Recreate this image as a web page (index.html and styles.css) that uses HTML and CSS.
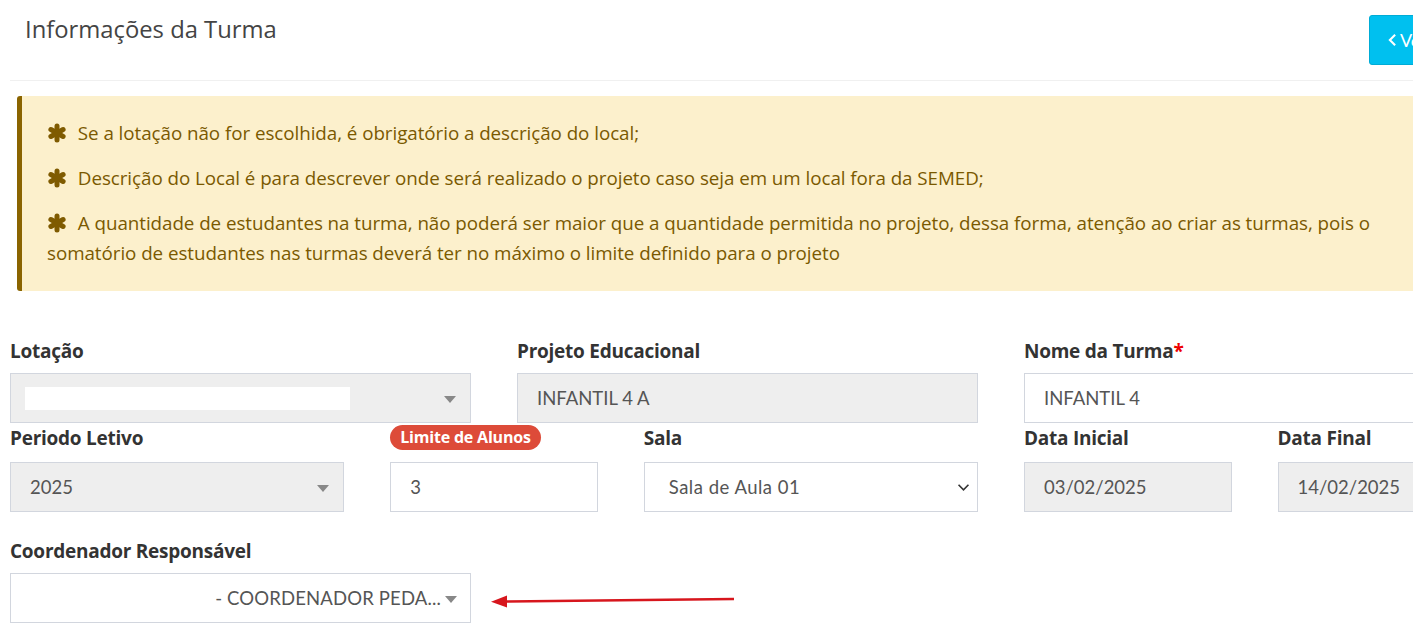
FILE: index.html
```html
<!DOCTYPE html>
<html lang="pt-BR">
<head>
<meta charset="utf-8">
<title>Informações da Turma</title>
<link rel="stylesheet" href="styles.css">
</head>
<body>
<div class="page">
  <div class="header">
    <h3 class="title">Informações da Turma</h3>
    <a class="btn-back"><svg class="chev" viewBox="0 0 10 16" width="9" height="14"><path d="M8 2 L2 8 L8 14" fill="none" stroke="#fff" stroke-width="2.4"/></svg>Voltar</a>
  </div>
  <hr class="divider">
  <div class="alert">
    <p><svg class="ast" viewBox="0 0 20 20"><g stroke="currentColor" stroke-width="5" stroke-linecap="round"><line x1="10" y1="3" x2="10" y2="17"/><line x1="3.9" y1="6.5" x2="16.1" y2="13.5"/><line x1="3.9" y1="13.5" x2="16.1" y2="6.5"/></g></svg> Se a lotação não for escolhida, é obrigatório a descrição do local;</p>
    <p><svg class="ast" viewBox="0 0 20 20"><g stroke="currentColor" stroke-width="5" stroke-linecap="round"><line x1="10" y1="3" x2="10" y2="17"/><line x1="3.9" y1="6.5" x2="16.1" y2="13.5"/><line x1="3.9" y1="13.5" x2="16.1" y2="6.5"/></g></svg> Descrição do Local é para descrever onde será realizado o projeto caso seja em um local fora da SEMED;</p>
    <p><svg class="ast" viewBox="0 0 20 20"><g stroke="currentColor" stroke-width="5" stroke-linecap="round"><line x1="10" y1="3" x2="10" y2="17"/><line x1="3.9" y1="6.5" x2="16.1" y2="13.5"/><line x1="3.9" y1="13.5" x2="16.1" y2="6.5"/></g></svg> A quantidade de estudantes na turma, não poderá ser maior que a quantidade permitida no projeto, dessa forma, atenção ao criar as turmas, pois o somatório de estudantes nas turmas deverá ter no máximo o limite definido para o projeto</p>
  </div>

  <div class="form">
    <div class="row row1">
      <div class="group span4">
        <label class="lbl">Lotação</label>
        <div class="ctrl disabled select2"><span class="redact"></span><span class="caret"></span></div>
      </div>
      <div class="group span4">
        <label class="lbl">Projeto Educacional</label>
        <div class="ctrl disabled">INFANTIL 4 A</div>
      </div>
      <div class="group span4">
        <label class="lbl">Nome da Turma<span class="req">*</span></label>
        <div class="ctrl">INFANTIL 4</div>
      </div>
    </div>
    <div class="row row2">
      <div class="group span3">
        <label class="lbl">Periodo Letivo</label>
        <div class="ctrl disabled select2"><span>2025</span><span class="caret"></span></div>
      </div>
      <div class="group span2">
        <label class="lbl"><span class="badge">Limite de Alunos</span></label>
        <div class="ctrl">3</div>
      </div>
      <div class="group span3">
        <label class="lbl">Sala</label>
        <div class="ctrl native"><span>Sala de Aula 01</span><svg class="down" viewBox="0 0 14 10" width="13" height="9"><path d="M1.5 2 L7 7.5 L12.5 2" fill="none" stroke="#333" stroke-width="1.8"/></svg></div>
      </div>
      <div class="group span2">
        <label class="lbl">Data Inicial</label>
        <div class="ctrl disabled">03/02/2025</div>
      </div>
      <div class="group span2">
        <label class="lbl">Data Final</label>
        <div class="ctrl disabled">14/02/2025</div>
      </div>
    </div>
    <div class="row row3">
      <div class="group span4">
        <label class="lbl">Coordenador Responsável</label>
        <div class="ctrl select2 right"><span>- COORDENADOR PEDA...</span><span class="caret"></span></div>
        <svg class="arrow" width="250" height="20" viewBox="0 0 250 20"><path d="M14 11.5 L245 9" stroke="#d7161d" stroke-width="2.5" fill="none"/><path d="M2 11.7 L18 5.5 L18 17.5 Z" fill="#d7161d"/></svg>
      </div>
    </div>
  </div>
</div>
</body>
</html>
```
FILE: styles.css
```css
* { box-sizing: border-box; }
html, body { margin: 0; padding: 0; }
body {
  font-family: "Lato", "Open Sans", sans-serif;
  background: #fff;
  color: #333;
  width: 1413px;
  height: 631px;
  overflow: hidden;
}
.page { width: 1540px; }
.header {
  display: flex;
  justify-content: space-between;
  align-items: flex-start;
  height: 80px;
  padding-left: 25px;
}
.title {
  margin: 13px 0 0 0;
  font-family: "Open Sans", sans-serif;
  font-weight: 400;
  font-size: 23.8px;
  color: #444;
}
.btn-back {
  margin-top: 15px;
  margin-right: 77px;
  width: 94px;
  height: 50px;
  background: #00c0ef;
  border: 1px solid #00acd6;
  border-radius: 3px;
  color: #fff;
  font-size: 18px;
  display: flex;
  align-items: center;
  padding-left: 18px;
  gap: 3px;
}
.divider {
  margin: 0 0 0 10px;
  border: 0;
  border-top: 1px solid #f0f0f0;
}
.alert {
  margin: 15px 0 0 17px;
  background: #fcf0cc;
  border-left: 5px solid #8a6400;
  border-radius: 3px;
  color: #7a5900;
  padding: 22px 20px 23px 25px;
  font-family: "Open Sans", sans-serif;
  font-size: 18.8px;
  letter-spacing: -0.05px;
  line-height: 30px;
  width: 1410px;
}
.alert p { margin: 0 0 15px 0; }
.alert p:last-child { margin-bottom: 0; }
.ast {
  width: 20px;
  height: 20px;
  vertical-align: -3px;
  color: #7f5b00;
  margin-right: 6px;
}
.form {
  margin-top: 46px;
  padding-left: 10px;
}
.row {
  display: grid;
  grid-template-columns: repeat(12, 80.75px);
  column-gap: 46px;
}
.span4 { grid-column: span 4; }
.span3 { grid-column: span 3; }
.span2 { grid-column: span 2; }
.group { position: relative; }
.lbl {
  display: flex;
  align-items: center;
  height: 28px;
  margin-bottom: 8px;
  font-family: "Open Sans", sans-serif;
  font-weight: 700;
  font-size: 19px;
  letter-spacing: -0.25px;
  color: #333;
}
.row2 .lbl { height: 25px; margin-bottom: 12px; }
.row2 { margin-top: 2px; }
.row3 { margin-top: 25px; }
.row3 .lbl { margin-bottom: 8px; }
.req { color: #e00; }
.badge {
  background: #dd4b39;
  color: #fff;
  font-size: 16px;
  font-weight: 700;
  border-radius: 13px;
  padding: 3px 10px 4px;
  line-height: 18px;
  letter-spacing: -0.2px;
}
.ctrl {
  height: 50px;
  border: 1px solid #d2d6de;
  background: #fff;
  color: #555;
  font-size: 18.5px;
  display: flex;
  align-items: center;
  padding: 0 19px;
}
.ctrl.disabled { background: #eee; }
.select2 { justify-content: space-between; padding-right: 14px; }
.select2.right { justify-content: flex-end; gap: 4px; padding-right: 13px; }
.select2.right span:first-child { letter-spacing: 0.15px; }
.redact {
  display: block;
  width: 325px;
  height: 23px;
  background: #fff;
  margin-left: -5px;
}
.caret {
  width: 0;
  height: 0;
  border-left: 6px solid transparent;
  border-right: 6px solid transparent;
  border-top: 7px solid #888;
  margin-top: 2px;
}
.native { justify-content: space-between; padding-left: 24px; padding-right: 7px; }
.native span { letter-spacing: 0.5px; }
.arrow {
  position: absolute;
  left: 479px;
  top: 53px;
}
```
